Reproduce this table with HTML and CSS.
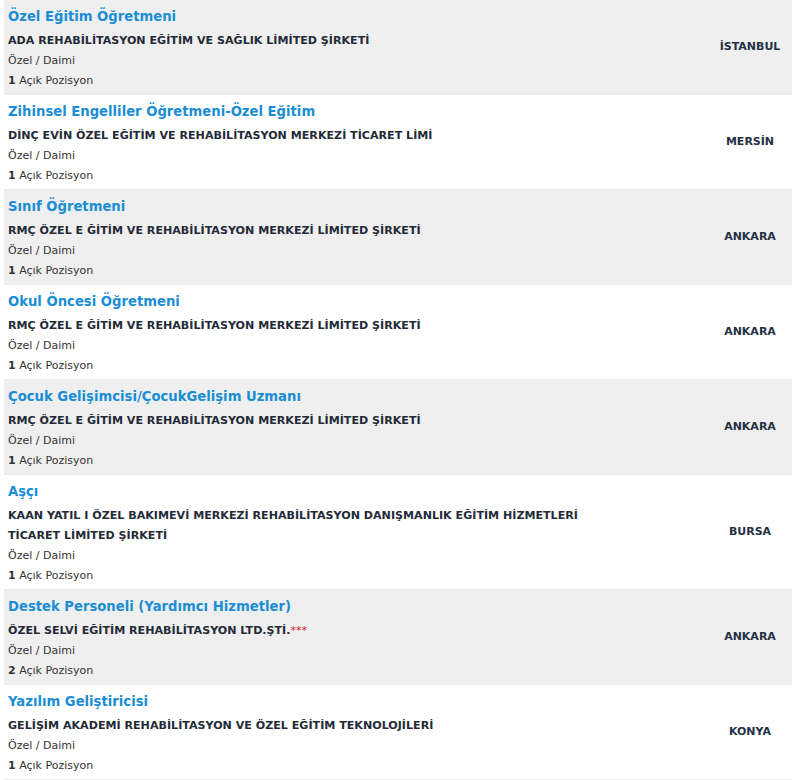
FILE: index.html
```
<!DOCTYPE html>
<html lang="tr">
<head>
    <meta charset="UTF-8">
    <meta name="viewport" content="width=device-width, initial-scale=1.0">
    <title>İş İlanları</title>
    <link rel="stylesheet" href="styles.css">
</head>
<body>

    <!-- Job listings -->
    <div class="job-list">
        <div class="job">
            <div class="job-info">
                <a class="job-title" href="#">Özel Eğitim Öğretmeni</a>
                <div class="company">ADA REHABİLİTASYON EĞİTİM VE SAĞLIK LİMİTED ŞİRKETİ</div>
                <div class="meta">Özel / Daimi</div>
                <div class="meta"><b>1</b> Açık Pozisyon</div>
            </div>
            <div class="city">İSTANBUL</div>
        </div>
        <div class="job">
            <div class="job-info">
                <a class="job-title" href="#">Zihinsel Engelliler Öğretmeni-Özel Eğitim</a>
                <div class="company">DİNÇ EVİN ÖZEL EĞİTİM VE REHABİLİTASYON MERKEZİ TİCARET LİMİ</div>
                <div class="meta">Özel / Daimi</div>
                <div class="meta"><b>1</b> Açık Pozisyon</div>
            </div>
            <div class="city">MERSİN</div>
        </div>
        <div class="job">
            <div class="job-info">
                <a class="job-title" href="#">Sınıf Öğretmeni</a>
                <div class="company">RMÇ ÖZEL E ĞİTİM VE REHABİLİTASYON MERKEZİ LİMİTED ŞİRKETİ</div>
                <div class="meta">Özel / Daimi</div>
                <div class="meta"><b>1</b> Açık Pozisyon</div>
            </div>
            <div class="city">ANKARA</div>
        </div>
        <div class="job">
            <div class="job-info">
                <a class="job-title" href="#">Okul Öncesi Öğretmeni</a>
                <div class="company">RMÇ ÖZEL E ĞİTİM VE REHABİLİTASYON MERKEZİ LİMİTED ŞİRKETİ</div>
                <div class="meta">Özel / Daimi</div>
                <div class="meta"><b>1</b> Açık Pozisyon</div>
            </div>
            <div class="city">ANKARA</div>
        </div>
        <div class="job">
            <div class="job-info">
                <a class="job-title" href="#">Çocuk Gelişimcisi/ÇocukGelişim Uzmanı</a>
                <div class="company">RMÇ ÖZEL E ĞİTİM VE REHABİLİTASYON MERKEZİ LİMİTED ŞİRKETİ</div>
                <div class="meta">Özel / Daimi</div>
                <div class="meta"><b>1</b> Açık Pozisyon</div>
            </div>
            <div class="city">ANKARA</div>
        </div>
        <div class="job">
            <div class="job-info">
                <a class="job-title" href="#">Aşçı</a>
                <div class="company">KAAN YATIL I ÖZEL BAKIMEVİ MERKEZİ REHABİLİTASYON DANIŞMANLIK EĞİTİM HİZMETLERİ<br>TİCARET LİMİTED ŞİRKETİ</div>
                <div class="meta">Özel / Daimi</div>
                <div class="meta"><b>1</b> Açık Pozisyon</div>
            </div>
            <div class="city">BURSA</div>
        </div>
        <div class="job">
            <div class="job-info">
                <a class="job-title" href="#">Destek Personeli (Yardımcı Hizmetler)</a>
                <div class="company">ÖZEL SELVİ EĞİTİM REHABİLİTASYON LTD.ŞTİ.<span class="stars">***</span></div>
                <div class="meta">Özel / Daimi</div>
                <div class="meta"><b>2</b> Açık Pozisyon</div>
            </div>
            <div class="city">ANKARA</div>
        </div>
        <div class="job">
            <div class="job-info">
                <a class="job-title" href="#">Yazılım Geliştiricisi</a>
                <div class="company">GELİŞİM AKADEMİ REHABİLİTASYON VE ÖZEL EĞİTİM TEKNOLOJİLERİ</div>
                <div class="meta">Özel / Daimi</div>
                <div class="meta"><b>1</b> Açık Pozisyon</div>
            </div>
            <div class="city">KONYA</div>
        </div>
    </div>

</body>
</html>
```

FILE: styles.css
```
body {
    font-family: "DejaVu Sans", Verdana, sans-serif;
    margin: 0;
    background: #fff;
    color: #333;
}
.job-list {
    padding-left: 4px;
}
.job {
    display: flex;
    align-items: center;
    padding: 5px 0 3px 4px;
    border-bottom: 1px solid #ececec;
    background: #fff;
}
.job:nth-child(odd) {
    background: #efefef;
}
.job-info {
    flex: 1;
}
.job-title {
    display: block;
    font-size: 13.2px;
    font-weight: bold;
    line-height: 23px;
    margin-bottom: 3px;
    color: #1a8dd4;
    text-decoration: none;
}
.company {
    font-size: 11.1px;
    font-weight: bold;
    line-height: 20px;
    color: #242b38;
}
.stars {
    color: #d0202a;
    font-weight: normal;
}
.meta {
    font-size: 11px;
    line-height: 20px;
    color: #333;
}
.city {
    width: 84px;
    padding-bottom: 4px;
    text-align: center;
    font-size: 11px;
    font-weight: bold;
    color: #243044;
}
```
